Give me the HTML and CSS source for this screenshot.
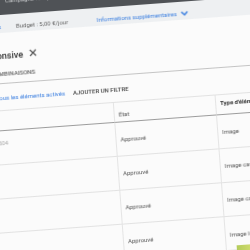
FILE: index.html
```html
<!DOCTYPE html>
<html lang="fr">
<head>
    <meta charset="UTF-8">
    <meta name="viewport" content="width=device-width, initial-scale=1.0">
    <title>Éléments de l'annonce</title>
    <link rel="stylesheet" href="styles.css">
</head>
<body>
    <div class="screen">
        <div class="topbar">
            <span class="crumb">Campagne : Display</span>
        </div>

        <div class="infobar">
            <div class="cut"><span class="link">Paramètres</span></div>
            <div class="budget">Budget : 5,00 €/jour</div>
            <span class="link">Informations supplémentaires</span>
            <svg class="chevron" width="8" height="6" viewBox="0 0 8 6">
                <path d="M1 1.2 L4 4.2 L7 1.2" fill="none" stroke="#3b7fe0" stroke-width="1.6"/>
            </svg>
        </div>

        <div class="title-row">
            <div class="cut title-cut"><h1 class="title">Annonce display responsive</h1></div>
            <svg class="close" width="8" height="8" viewBox="0 0 8 8">
                <path d="M1 1 L7 7 M7 1 L1 7" stroke="#555" stroke-width="1.2"/>
            </svg>
        </div>

        <div class="tabs">
            <div class="cut tabs-cut">
                <span class="tab">ÉLÉMENTS</span>
                <span class="tab">COMBINAISONS</span>
            </div>
        </div>

        <div class="filters">
            <div class="cut filter-cut"><span class="link">Filtre : Tous les éléments activés</span></div>
            <span class="add-filter">AJOUTER UN FILTRE</span>
        </div>

        <div class="table">
            <div class="th"></div>
            <div class="th state">État</div>
            <div class="th type">Type d'élément</div>

            <div class="td"><div class="cut id-cut"><span class="id">ID 12504</span></div></div>
            <div class="td col">Approuvé</div>
            <div class="td col">Image</div>

            <div class="td"></div>
            <div class="td col">Approuvé</div>
            <div class="td col">Image carrée</div>

            <div class="td"></div>
            <div class="td col">Approuvé</div>
            <div class="td col">Image carrée</div>

            <div class="td"></div>
            <div class="td col">Approuvé</div>
            <div class="td col media">
                <span>Image logo</span>
                <span class="thumb"></span>
            </div>
        </div>
    </div>
</body>
</html>
```

FILE: styles.css
```css
body {
    margin: 0;
    overflow: hidden;
    background-color: #fbfbfb;
    font-family: Roboto, "Liberation Sans", sans-serif;
    color: #555;
}

/* the photo is taken slightly tilted */
.screen {
    width: 290px;
    margin-left: -20px;
    transform: rotate(-4.2deg);
    transform-origin: 20px 0;
    filter: blur(0.4px);
}

.cut {
    display: flex;
    justify-content: flex-end;
    white-space: nowrap;
    flex-shrink: 0;
}

.link {
    color: #3b7fe0;
    font-size: 6px;
}

.topbar {
    height: 15px;
    background-color: #4f5256;
    display: flex;
    align-items: flex-start;
    padding-left: 25px;
}

.crumb {
    margin-top: -3px;
    font-size: 6px;
    line-height: 8px;
    color: #c9cbcd;
}

.infobar {
    height: 18px;
    background-color: #eef0f2;
    display: flex;
    align-items: flex-end;
    padding-bottom: 2px;
    box-sizing: border-box;
    line-height: 8px;
}

.infobar .cut {
    width: 19px;
}

.budget {
    width: 81px;
    margin-left: 15px;
    font-size: 6px;
    color: #666;
}

.chevron {
    margin-left: 4px;
    margin-bottom: 1px;
}

.title-row {
    display: flex;
    align-items: center;
    height: 12px;
    margin-top: 17px;
}

.title-cut {
    width: 39px;
}

.title {
    margin: 0;
    font-size: 9px;
    font-weight: 500;
    color: #333;
    line-height: 12px;
}

.close {
    margin-left: 6px;
    margin-top: -3px;
}

.tabs {
    height: 22px;
    padding-top: 6px;
    box-sizing: border-box;
    border-bottom: 1px solid #c4c4c4;
    line-height: 12px;
}

.tabs-cut {
    width: 50px;
    gap: 14px;
}

.tab {
    font-size: 6px;
    font-weight: 500;
    color: #666;
}

.filters {
    height: 26px;
    display: flex;
    align-items: center;
}

.filter-cut {
    width: 78px;
}

.add-filter {
    margin-left: 8px;
    font-size: 6px;
    font-weight: 500;
    color: #444;
}

.table {
    display: grid;
    grid-template-columns: 125px 102px 1fr;
    grid-auto-rows: 34px;
    grid-template-rows: 20px;
    border-top: 1px solid #e2e2e2;
    padding-bottom: 12px;
}

.th {
    border-bottom: 1px solid #9c9c9c;
    font-size: 6px;
    line-height: 8px;
    display: flex;
}

.th.state {
    align-items: flex-end;
    padding: 0 0 3px 4px;
    border-left: 1px solid #e4e4e4;
    color: #555;
}

.th.type {
    align-items: flex-start;
    padding: 4px 0 0 4px;
    border-left: 1px solid #e4e4e4;
    font-weight: bold;
    color: #333;
    white-space: nowrap;
}

.td {
    border-bottom: 1px solid #e2e2e2;
    font-size: 6px;
    display: flex;
    align-items: center;
    white-space: nowrap;
}

.td.col {
    border-left: 1px solid #e4e4e4;
    padding-left: 4px;
    color: #555;
}

.td.media {
    flex-direction: column;
    align-items: flex-start;
    padding-top: 14px;
    line-height: 8px;
}

.thumb {
    flex-shrink: 0;
    width: 18px;
    height: 8px;
    margin: 7px 0 0 6px;
    background: linear-gradient(90deg, #b4cc5c, #d6df72);
}

.id-cut {
    width: 18px;
    margin-top: -10px;
}

.id {
    color: #aaa;
}
```
